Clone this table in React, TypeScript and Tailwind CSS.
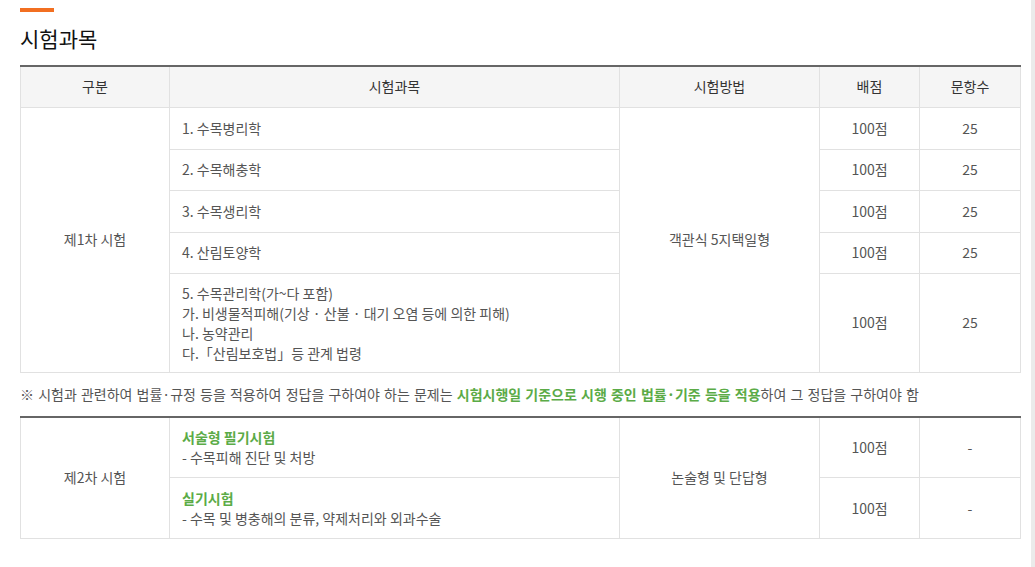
import React from "react";

const font = { fontFamily: '"Noto Sans CJK KR", "Noto Sans", sans-serif' };

const th = "border border-[#e1e1e1] bg-[#f5f5f5] text-[14px] font-normal text-[#333] text-center";
const td = "border border-[#e1e1e1] text-[14px] text-[#555] text-center";
const tdl = "border border-[#e1e1e1] text-[14px] text-[#555] text-left pl-[12px]";

export default function App() {
  return (
    <div className="flex w-[1035px] h-[567px] bg-white overflow-hidden" style={font}>
      <div className="w-[1031px] pt-[8px] pl-[20px] pr-[11px]">
        <div className="w-[34px] h-[4px] bg-[#f26f21]" />
        <h2 className="mt-[12px] text-[21px] leading-[28px] text-[#111] font-normal">시험과목</h2>
        <table className="mt-[13px] w-[1000px] border-collapse table-fixed border-t-2 border-t-[#666]">
          <colgroup>
            <col className="w-[149px]" />
            <col className="w-[450px]" />
            <col className="w-[200px]" />
            <col className="w-[100px]" />
            <col className="w-[101px]" />
          </colgroup>
          <thead>
            <tr className="h-[41px]">
              <th className={th + " border-t-2 border-t-[#666]"}>구분</th>
              <th className={th + " border-t-2 border-t-[#666]"}>시험과목</th>
              <th className={th + " border-t-2 border-t-[#666]"}>시험방법</th>
              <th className={th + " border-t-2 border-t-[#666]"}>배점</th>
              <th className={th + " border-t-2 border-t-[#666]"}>문항수</th>
            </tr>
          </thead>
          <tbody>
            <tr className="h-[42px]">
              <td className={td} rowSpan={5}>제1차 시험</td>
              <td className={tdl}>1. 수목병리학</td>
              <td className={td} rowSpan={5}>객관식 5지택일형</td>
              <td className={td}>100점</td>
              <td className={td}>25</td>
            </tr>
            <tr className="h-[41px]">
              <td className={tdl}>2. 수목해충학</td>
              <td className={td}>100점</td>
              <td className={td}>25</td>
            </tr>
            <tr className="h-[42px]">
              <td className={tdl}>3. 수목생리학</td>
              <td className={td}>100점</td>
              <td className={td}>25</td>
            </tr>
            <tr className="h-[41px]">
              <td className={tdl}>4. 산림토양학</td>
              <td className={td}>100점</td>
              <td className={td}>25</td>
            </tr>
            <tr className="h-[99px]">
              <td className={tdl + " leading-[20px]"}>
                5. 수목관리학(가~다 포함)
                <br />가. 비생물적피해(기상 · 산불 · 대기 오염 등에 의한 피해)
                <br />나. 농약관리
                <br />다.「산림보호법」등 관계 법령
              </td>
              <td className={td}>100점</td>
              <td className={td}>25</td>
            </tr>
          </tbody>
        </table>
        <p className="mt-[11px] text-[14px] leading-[20px] text-[#555] [word-spacing:1px]">
          ※ 시험과 관련하여 법률·규정 등을 적용하여 정답을 구하여야 하는 문제는{" "}
          <span className="font-bold text-[#5bab47]">시험시행일 기준으로 시행 중인 법률·기준 등을 적용</span>
          하여 그 정답을 구하여야 함
        </p>
        <table className="mt-[12px] w-[1000px] border-collapse table-fixed">
          <colgroup>
            <col className="w-[149px]" />
            <col className="w-[450px]" />
            <col className="w-[200px]" />
            <col className="w-[100px]" />
            <col className="w-[101px]" />
          </colgroup>
          <tbody>
            <tr className="h-[61px]">
              <td className={td + " border-t-2 border-t-[#666]"} rowSpan={2}>제2차 시험</td>
              <td className={tdl + " leading-[20px] border-t-2 border-t-[#666]"}>
                <span className="font-bold text-[#5bab47]">서술형 필기시험</span>
                <br />- 수목피해 진단 및 처방
              </td>
              <td className={td + " border-t-2 border-t-[#666]"} rowSpan={2}>논술형 및 단답형</td>
              <td className={td + " border-t-2 border-t-[#666]"}>100점</td>
              <td className={td + " border-t-2 border-t-[#666]"}>-</td>
            </tr>
            <tr className="h-[61px]">
              <td className={tdl + " leading-[20px]"}>
                <span className="font-bold text-[#5bab47]">실기시험</span>
                <br />- 수목 및 병충해의 분류, 약제처리와 외과수술
              </td>
              <td className={td}>100점</td>
              <td className={td}>-</td>
            </tr>
          </tbody>
        </table>
      </div>
      <div className="w-[4px] h-full bg-[#ebebeb]" />
    </div>
  );
}
